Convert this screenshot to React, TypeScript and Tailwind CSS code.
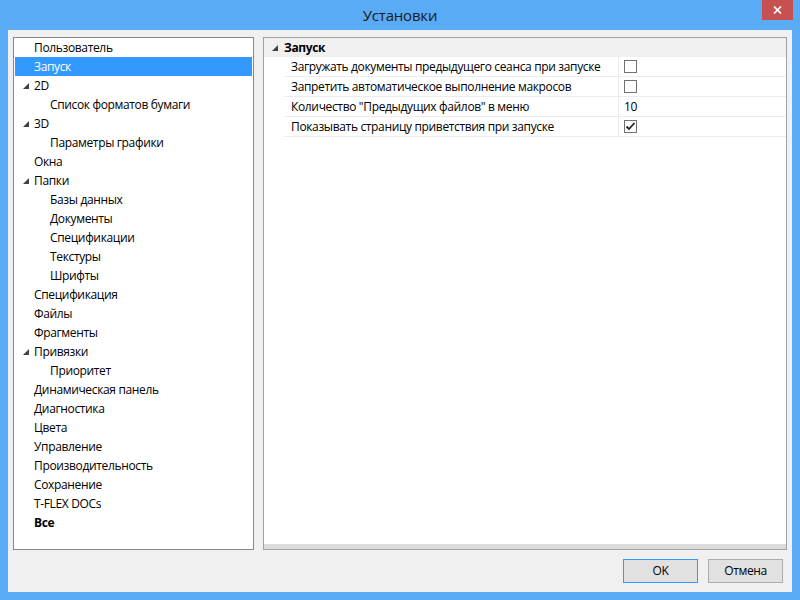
import React from 'react';

type TreeItem = { label: string; level: 0 | 1; expander?: boolean; selected?: boolean; bold?: boolean };

const TREE: TreeItem[] = [
  { label: 'Пользователь', level: 0 },
  { label: 'Запуск', level: 0, selected: true },
  { label: '2D', level: 0, expander: true },
  { label: 'Список форматов бумаги', level: 1 },
  { label: '3D', level: 0, expander: true },
  { label: 'Параметры графики', level: 1 },
  { label: 'Окна', level: 0 },
  { label: 'Папки', level: 0, expander: true },
  { label: 'Базы данных', level: 1 },
  { label: 'Документы', level: 1 },
  { label: 'Спецификации', level: 1 },
  { label: 'Текстуры', level: 1 },
  { label: 'Шрифты', level: 1 },
  { label: 'Спецификация', level: 0 },
  { label: 'Файлы', level: 0 },
  { label: 'Фрагменты', level: 0 },
  { label: 'Привязки', level: 0, expander: true },
  { label: 'Приоритет', level: 1 },
  { label: 'Динамическая панель', level: 0 },
  { label: 'Диагностика', level: 0 },
  { label: 'Цвета', level: 0 },
  { label: 'Управление', level: 0 },
  { label: 'Производительность', level: 0 },
  { label: 'Сохранение', level: 0 },
  { label: 'T-FLEX DOCs', level: 0 },
  { label: 'Все', level: 0, bold: true },
];

type Prop = { label: string; kind: 'check' | 'text'; checked?: boolean; value?: string };

const PROPS: Prop[] = [
  { label: 'Загружать документы предыдущего сеанса при запуске', kind: 'check' },
  { label: 'Запретить автоматическое выполнение макросов', kind: 'check' },
  { label: 'Количество "Предыдущих файлов" в меню', kind: 'text', value: '10' },
  { label: 'Показывать страницу приветствия при запуске', kind: 'check', checked: true },
];

function Expander() {
  return (
    <svg width="6" height="6" viewBox="0 0 6 6" className="block">
      <polygon points="6,0 6,6 0,6" fill="#404040" />
    </svg>
  );
}

function CheckBox({ checked }: { checked?: boolean }) {
  return (
    <div className="w-[13px] h-[13px] border border-[#707070] bg-white flex items-center justify-center">
      {checked && (
        <svg width="11" height="11" viewBox="0 0 11 11">
          <path d="M1.5 5.5 L4 8 L9.5 2" stroke="#222" strokeWidth="1.8" fill="none" />
        </svg>
      )}
    </div>
  );
}

export default function App() {
  return (
    <div
      className="w-[800px] h-[600px] bg-[#5aabf6] flex flex-col text-[12px] tracking-[-0.35px] text-black"
      style={{ fontFamily: '"Open Sans", "Noto Sans", sans-serif' }}
    >
      {/* Title bar */}
      <div className="relative h-[30px] flex items-center justify-center">
        <span className="text-[15px] tracking-[-0.2px] text-[#1a1a1a] leading-none">Установки</span>
        <div className="absolute right-[7px] top-0 w-[31px] h-[20px] bg-[#c75050] flex items-center justify-center">
          <svg width="9" height="8" viewBox="0 0 9 8">
            <path d="M1 0.5 L8 7.5 M8 0.5 L1 7.5" stroke="#fff" strokeWidth="1.7" />
          </svg>
        </div>
      </div>

      {/* Client area */}
      <div className="flex-1 mx-[8px] mb-[8px] bg-[#f0f0f0] flex flex-col pt-[7px] pl-[5px] pr-[5px] pb-[9px]">
        <div className="flex gap-[9px] h-[513px]">
          {/* Tree */}
          <div className="w-[241px] border border-[#828790] bg-white px-[1px]">
            {TREE.map((t) => (
              <div
                key={t.label}
                className={`h-[19px] flex items-center ${t.selected ? 'bg-[#3399ff] text-white' : ''}`}
              >
                <div className="w-[19px] flex justify-end pr-[5px]">{t.expander && <Expander />}</div>
                <span className={`${t.level === 1 ? 'pl-[16px]' : ''} ${t.bold ? 'font-bold' : ''} whitespace-nowrap`}>
                  {t.label}
                </span>
              </div>
            ))}
          </div>

          {/* Property grid */}
          <div className="flex-1 border border-[#a0a0a0] bg-white flex flex-col">
            <div className="flex-1">
              <div className="h-[19px] bg-[#f0f0f0] flex items-center">
                <div className="w-[20px] flex justify-end pr-[6px]"><Expander /></div>
                <span className="font-bold">Запуск</span>
              </div>
              {PROPS.map((p) => (
                <div key={p.label} className="ml-[20px] h-[20px] flex border-b border-[#ececec]">
                  <div className="w-[335px] pl-[7px] border-r border-[#ececec] flex items-center whitespace-nowrap">
                    {p.label}
                  </div>
                  <div className="flex-1 pl-[5px] flex items-center">
                    {p.kind === 'check' ? <CheckBox checked={p.checked} /> : <span>{p.value}</span>}
                  </div>
                </div>
              ))}
            </div>
            <div className="h-[5px] bg-[#dcdcdc]" />
          </div>
        </div>

        {/* Buttons */}
        <div className="flex justify-end gap-[10px] mt-[9px] pr-[4px]">
          <button className="w-[75px] h-[24px] bg-[#e1e1e1] border border-[#3399ff]">OK</button>
          <button className="w-[75px] h-[24px] bg-[#e1e1e1] border border-[#adadad]">Отмена</button>
        </div>
      </div>
    </div>
  );
}
